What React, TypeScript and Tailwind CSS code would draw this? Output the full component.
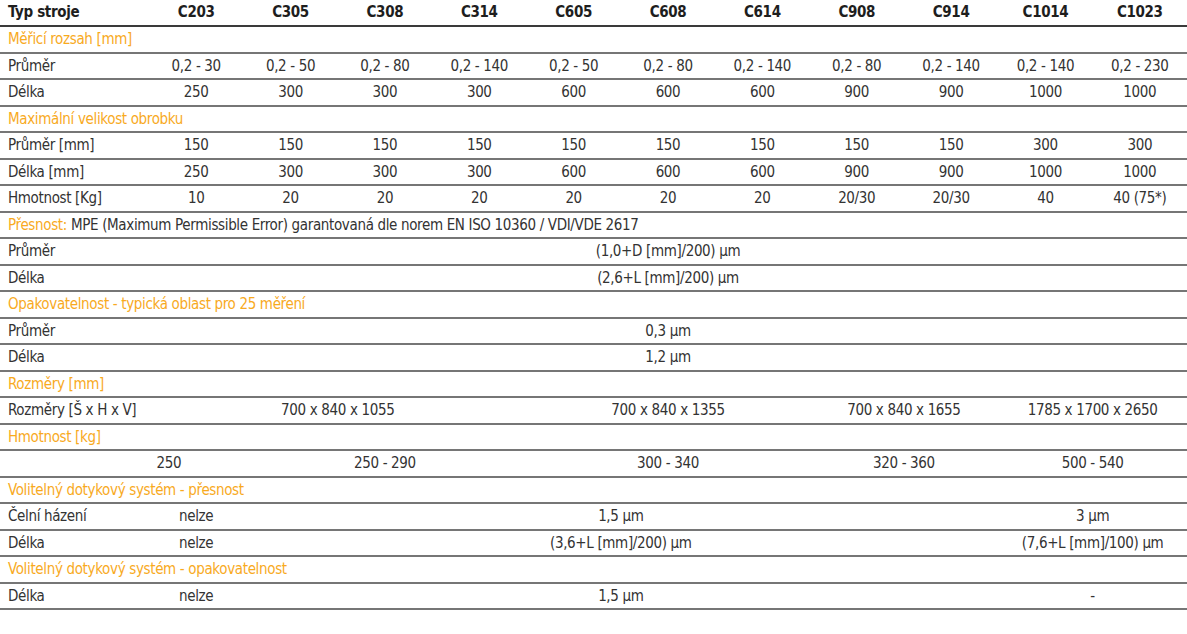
import React from "react";

const COLS = ["C203", "C305", "C308", "C314", "C605", "C608", "C614", "C908", "C914", "C1014", "C1023"];

const grid = "grid grid-cols-[149px_repeat(11,minmax(0,1fr))] items-center";
const row = `${grid} h-[26.5px] border-b-2 border-[#767676]`;
const font = { fontFamily: '"Liberation Sans Narrow", "DejaVu Sans", "Liberation Sans", sans-serif' };

function Section({ children }: { children: React.ReactNode }) {
  return (
    <div className="flex h-[26.5px] items-center border-b-2 border-[#767676] pl-2 text-[#f8aa1e]">
      {children}
    </div>
  );
}

function DataRow({ label, values }: { label: string; values: string[] }) {
  return (
    <div className={row}>
      <div className="pl-2">{label}</div>
      {values.map((v, i) => (
        <div key={i} className="text-center">
          {v}
        </div>
      ))}
    </div>
  );
}

export default function App() {
  return (
    <div
      className="w-[1187px] h-[634px] bg-white text-[15px] tracking-[-0.35px] text-[#333333] font-stretch-condensed"
      style={font}
    >
      <div className={`${grid} h-[27px] border-b-2 border-[#3a3a3a] font-bold text-[#1e1e1e]`}>
        <div className="pl-2">Typ stroje</div>
        {COLS.map((c) => (
          <div key={c} className="text-center">
            {c}
          </div>
        ))}
      </div>

      <Section>Měřicí rozsah [mm]</Section>
      <DataRow
        label="Průměr"
        values={["0,2 - 30", "0,2 - 50", "0,2 - 80", "0,2 - 140", "0,2 - 50", "0,2 - 80", "0,2 - 140", "0,2 - 80", "0,2 - 140", "0,2 - 140", "0,2 - 230"]}
      />
      <DataRow label="Délka" values={["250", "300", "300", "300", "600", "600", "600", "900", "900", "1000", "1000"]} />

      <Section>Maximální velikost obrobku</Section>
      <DataRow label="Průměr [mm]" values={["150", "150", "150", "150", "150", "150", "150", "150", "150", "300", "300"]} />
      <DataRow label="Délka [mm]" values={["250", "300", "300", "300", "600", "600", "600", "900", "900", "1000", "1000"]} />
      <DataRow label="Hmotnost [Kg]" values={["10", "20", "20", "20", "20", "20", "20", "20/30", "20/30", "40", "40 (75*)"]} />

      <div className="flex h-[26.5px] items-center border-b-2 border-[#767676] pl-2">
        <span className="text-[#f8aa1e]">Přesnost:</span>
        <span className="ml-1">MPE (Maximum Permissible Error) garantovaná dle norem EN ISO 10360 / VDI/VDE 2617</span>
      </div>
      <div className={row}>
        <div className="pl-2">Průměr</div>
        <div className="col-span-11 text-center">(1,0+D [mm]/200) µm</div>
      </div>
      <div className={row}>
        <div className="pl-2">Délka</div>
        <div className="col-span-11 text-center">(2,6+L [mm]/200) µm</div>
      </div>

      <Section>Opakovatelnost - typická oblast pro 25 měření</Section>
      <div className={row}>
        <div className="pl-2">Průměr</div>
        <div className="col-span-11 text-center">0,3 µm</div>
      </div>
      <div className={row}>
        <div className="pl-2">Délka</div>
        <div className="col-span-11 text-center">1,2 µm</div>
      </div>

      <Section>Rozměry [mm]</Section>
      <div className={row}>
        <div className="pl-2">Rozměry [Š x H x V]</div>
        <div className="col-span-4 text-center">700 x 840 x 1055</div>
        <div className="col-span-3 text-center">700 x 840 x 1355</div>
        <div className="col-span-2 text-center">700 x 840 x 1655</div>
        <div className="col-span-2 text-center">1785 x 1700 x 2650</div>
      </div>

      <Section>Hmotnost [kg]</Section>
      <div className={row}>
        <div className="col-span-3 text-center">250</div>
        <div className="col-span-1 text-center">250 - 290</div>
        <div className="col-start-6 col-span-3 text-center">300 - 340</div>
        <div className="col-span-2 text-center">320 - 360</div>
        <div className="col-span-2 text-center">500 - 540</div>
      </div>

      <Section>Volitelný dotykový systém - přesnost</Section>
      <div className={row}>
        <div className="pl-2">Čelní házení</div>
        <div className="text-center">nelze</div>
        <div className="col-span-8 text-center">1,5 µm</div>
        <div className="col-span-2 text-center">3 µm</div>
      </div>
      <div className={row}>
        <div className="pl-2">Délka</div>
        <div className="text-center">nelze</div>
        <div className="col-span-8 text-center">(3,6+L [mm]/200) µm</div>
        <div className="col-span-2 text-center">(7,6+L [mm]/100) µm</div>
      </div>

      <Section>Volitelný dotykový systém - opakovatelnost</Section>
      <div className={row}>
        <div className="pl-2">Délka</div>
        <div className="text-center">nelze</div>
        <div className="col-span-8 text-center">1,5 µm</div>
        <div className="col-span-2 text-center">-</div>
      </div>
    </div>
  );
}
